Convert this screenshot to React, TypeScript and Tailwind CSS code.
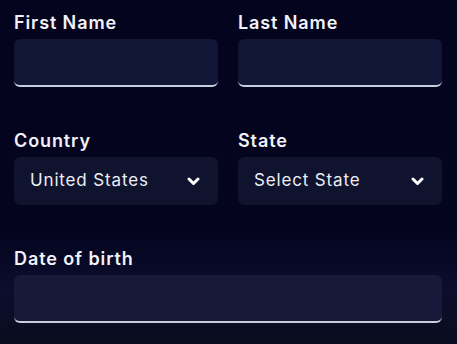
function Field({ label, children }: { label: string; children: React.ReactNode }) {
  return (
    <div className="flex flex-col gap-[4px]">
      <label className="text-[18px] leading-6 font-semibold tracking-[0.05em] text-[#f1f2f8]">{label}</label>
      {children}
    </div>
  );
}

function TextInput() {
  return (
    <input
      type="text"
      className="h-12 w-full rounded-md border-b-2 border-[#c9cde0] bg-[#111536] px-4 text-[17px] text-white outline-none"
    />
  );
}

function Chevron() {
  return (
    <svg width="13" height="9" viewBox="0 0 13 9" fill="none">
      <path d="M2 2l4.5 4.5L11 2" stroke="white" strokeWidth="3" strokeLinecap="round" strokeLinejoin="round" />
    </svg>
  );
}

function Select({ value }: { value: string }) {
  return (
    <div className="flex h-12 w-full items-center justify-between rounded-md bg-[#10132e] pl-4 pr-[18px]">
      <span className="text-[17px] tracking-[0.05em] text-[#eceef6]">{value}</span>
      <Chevron />
    </div>
  );
}

export default function App() {
  return (
    <div
      className="relative h-[344px] w-[457px] overflow-hidden bg-[#04041f] px-[14px] pt-[11px] pr-[15px]"
      style={{ fontFamily: "Inter, 'Noto Sans', sans-serif" }}
    >
      <div className="pointer-events-none absolute inset-x-0 bottom-0 h-[110px] bg-gradient-to-b from-transparent via-[#0e1232]/70 to-[#0a0d1e]" />
      <div className="relative grid grid-cols-2 gap-x-5 gap-y-[42px]">
        <Field label="First Name">
          <TextInput />
        </Field>
        <Field label="Last Name">
          <TextInput />
        </Field>
        <Field label="Country">
          <Select value="United States" />
        </Field>
        <Field label="State">
          <Select value="Select State" />
        </Field>
        <div className="col-span-2">
          <Field label="Date of birth">
            <input
              type="text"
              className="h-12 w-full rounded-md border-b-2 border-[#c9cde0] bg-[#16193a] px-4 text-[17px] text-white outline-none"
            />
          </Field>
        </div>
      </div>
    </div>
  );
}
